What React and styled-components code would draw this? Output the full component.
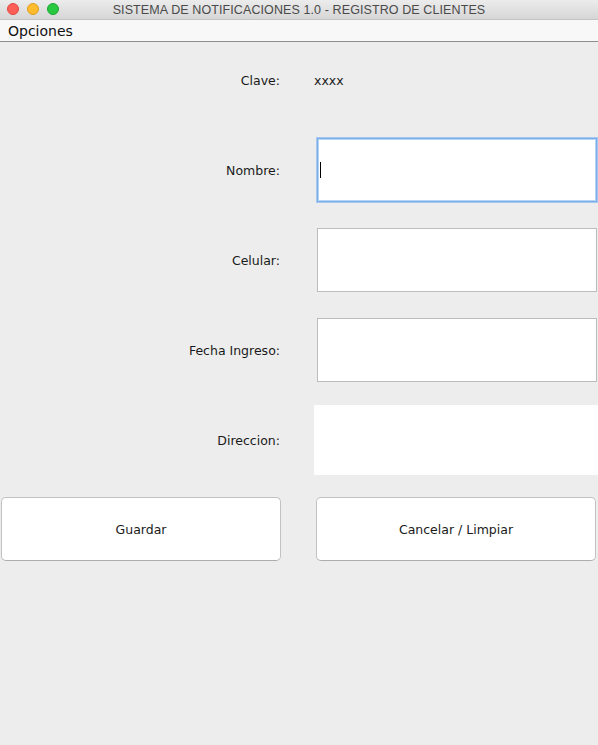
import React from "react";
import styled, { createGlobalStyle } from "styled-components";

const Global = createGlobalStyle`
  html, body { margin: 0; padding: 0; background: #ededed; }
  body { width: 598px; height: 745px; overflow: hidden; font-family: "DejaVu Sans", "Liberation Sans", sans-serif; }
`;

const Window = styled.div`
  width: 598px;
  height: 745px;
  display: flex;
  flex-direction: column;
  background: #ededed;
`;

const TitleBar = styled.div`
  height: 20px;
  position: relative;
  display: flex;
  align-items: center;
  justify-content: center;
  background: linear-gradient(#ececec, #d6d6d6);
  border-bottom: 1px solid #c4c4c4;
  box-sizing: border-box;
`;

const Lights = styled.div`
  position: absolute;
  left: 7px;
  top: 3px;
  display: flex;
  gap: 8px;
`;

const Light = styled.span`
  width: 12px;
  height: 12px;
  border-radius: 50%;
  box-sizing: border-box;
  background: ${(p) => p.$c};
  border: 0.5px solid ${(p) => p.$b};
`;

const Title = styled.div`
  font-family: "Liberation Sans", Arial, sans-serif;
  font-size: 12.5px;
  color: #4a4a4a;
  letter-spacing: 0.1px;
`;

const MenuBar = styled.div`
  height: 22px;
  background: #f8f8f8;
  border-bottom: 1px solid #8e8e8e;
  display: flex;
  align-items: center;
  padding-left: 8px;
  box-sizing: border-box;
`;

const MenuItem = styled.span`
  font-size: 14px;
  color: #111;
`;

const Form = styled.div`
  display: grid;
  grid-template-columns: 280px 1fr;
  column-gap: 37px;
  align-items: center;
`;

const Label = styled.div`
  font-size: 12.5px;
  color: #1a1a1a;
  height: ${(p) => p.$h}px;
  margin-top: ${(p) => p.$mt || 0}px;
  display: flex;
  align-items: center;
  justify-content: flex-end;
`;

const Value = styled.div`
  font-size: 12.5px;
  color: #1a1a1a;
  margin-left: -3px;
`;

const Field = styled.div`
  height: 64px;
  width: 280px;
  margin-top: ${(p) => p.$mt || 0}px;
  box-sizing: border-box;
  background: #fff;
  border: 1px solid #bdbdbd;
  display: flex;
  align-items: center;
  padding-left: 2px;
  ${(p) =>
    p.$focus &&
    `
    border: 1px solid #7aaee8;
    box-shadow: 0 0 0 1px #a6c8f0, inset 0 0 0 1px #b9d5f5;
  `}
`;

const Caret = styled.span`
  width: 1px;
  height: 16px;
  background: #000;
`;

const Area = styled.div`
  height: 70px;
  margin-left: -3px;
  margin-top: ${(p) => p.$mt || 0}px;
  background: #fff;
`;

const Buttons = styled.div`
  display: grid;
  grid-template-columns: 280px 280px;
  column-gap: 35px;
  padding-left: 1px;
  margin-top: 22px;
`;

const Button = styled.button`
  height: 64px;
  background: #fff;
  border: 1px solid #c2c2c2;
  border-bottom-color: #adadad;
  border-radius: 5px;
  font-family: "DejaVu Sans", sans-serif;
  font-size: 12.5px;
  color: #1a1a1a;
  padding: 0;
`;

export default function App() {
  return (
    <Window>
      <Global />
      <TitleBar>
        <Lights>
          <Light $c="#fc5f57" $b="#de4a43" />
          <Light $c="#fdbc2e" $b="#dd9e22" />
          <Light $c="#28c940" $b="#1fa630" />
        </Lights>
        <Title>SISTEMA DE NOTIFICACIONES 1.0 - REGISTRO DE CLIENTES</Title>
      </TitleBar>
      <MenuBar>
        <MenuItem>Opciones</MenuItem>
      </MenuBar>
      <Form>
        <Label $h={76}>Clave:</Label>
        <Value>xxxx</Value>

        <Label $h={64} $mt={20}>Nombre:</Label>
        <Field $mt={20} $focus>
          <Caret />
        </Field>

        <Label $h={64} $mt={26}>Celular:</Label>
        <Field $mt={26} />

        <Label $h={64} $mt={26}>Fecha Ingreso:</Label>
        <Field $mt={26} />

        <Label $h={70} $mt={23}>Direccion:</Label>
        <Area $mt={23} />
      </Form>
      <Buttons>
        <Button>Guardar</Button>
        <Button>Cancelar / Limpiar</Button>
      </Buttons>
    </Window>
  );
}
